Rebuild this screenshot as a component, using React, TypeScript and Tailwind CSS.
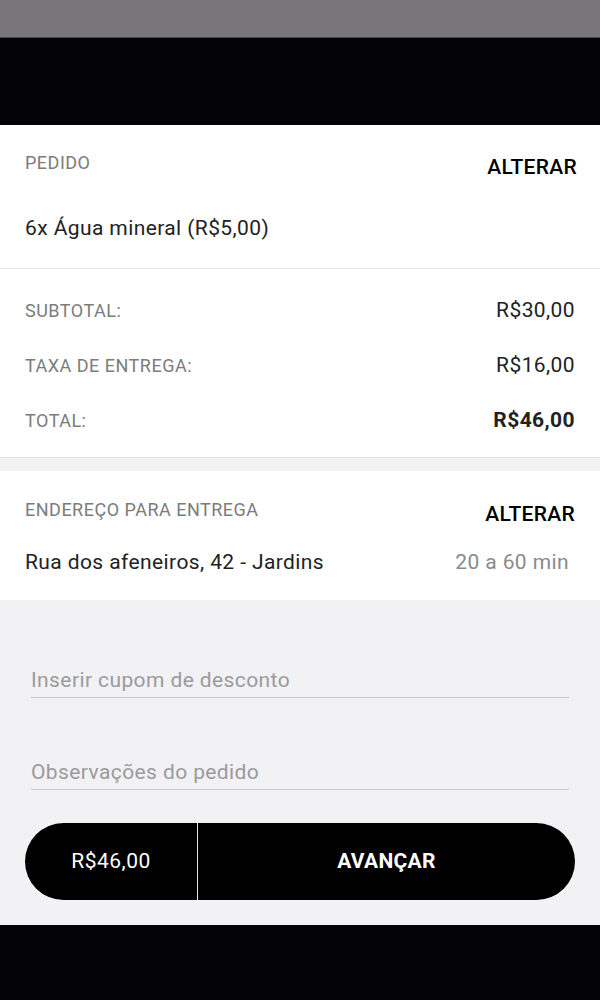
const font = { fontFamily: "Roboto, 'Noto Sans', sans-serif" };

function SummaryRow({ label, value, bold }: { label: string; value: string; bold?: boolean }) {
  return (
    <div className="flex h-[55px] items-center justify-between">
      <span className="text-[18px] uppercase tracking-[0.5px] text-[#7c7c7c]">{label}</span>
      <span className={`text-[21px] tracking-[0.4px] text-[#222] ${bold ? "font-bold" : ""}`}>{value}</span>
    </div>
  );
}

export default function App() {
  return (
    <div className="flex min-h-[1000px] w-[600px] flex-col bg-[#f2f1f4]" style={font}>
      {/* status bar + header */}
      <div className="h-[37px] bg-[#787679]" />
      <div className="h-px bg-[#4a494c]" />
      <div className="h-[87px] bg-[#030205]" />

      {/* pedido */}
      <section className="border-b border-[#e8e8ea] bg-white px-[25px] pb-[26px] pt-[26px]">
        <div className="flex justify-between">
          <span className="text-[18px] leading-[24px] tracking-[0.5px] text-[#7c7c7c]">PEDIDO</span>
          <button className="mr-[-2px] mt-[2px] text-[21px] font-medium leading-[28px] tracking-[0.3px] text-black">
            ALTERAR
          </button>
        </div>
        <p className="mt-[33px] text-[21px] leading-[28px] tracking-[0.4px] text-[#222]">6x Água mineral (R$5,00)</p>
      </section>

      {/* totals */}
      <section className="border-b border-[#e5e5e7] bg-white px-[25px] pb-[9px] pt-[14px]">
        <SummaryRow label="Subtotal:" value="R$30,00" />
        <SummaryRow label="Taxa de entrega:" value="R$16,00" />
        <SummaryRow label="Total:" value="R$46,00" bold />
      </section>

      {/* endereço */}
      <section className="mt-[13px] bg-white px-[25px] pb-[24px] pt-[27px]">
        <div className="flex justify-between">
          <span className="text-[18px] leading-[24px] tracking-[0.5px] text-[#7c7c7c]">ENDEREÇO PARA ENTREGA</span>
          <button className="mt-[2px] text-[21px] font-medium leading-[28px] tracking-[0.3px] text-black">
            ALTERAR
          </button>
        </div>
        <div className="mt-[20px] flex justify-between">
          <span className="text-[21px] leading-[28px] tracking-[0.4px] text-[#222]">Rua dos afeneiros, 42 - Jardins</span>
          <span className="mr-[6px] text-[21px] leading-[28px] tracking-[0.4px] text-[#8a8a8a]">20 a 60 min</span>
        </div>
      </section>

      {/* campos */}
      <div className="flex flex-col gap-[52px] px-[31px] pt-[58px]">
        <input
          placeholder="Inserir cupom de desconto"
          className="h-[40px] border-b border-[#c9c8cb] bg-transparent pt-[4px] text-[21px] tracking-[0.4px] text-[#222] outline-none placeholder:text-[#9b9a9d]"
          style={font}
        />
        <input
          placeholder="Observações do pedido"
          className="h-[40px] border-b border-[#c9c8cb] bg-transparent pt-[4px] text-[21px] tracking-[0.4px] text-[#222] outline-none placeholder:text-[#9b9a9d]"
          style={font}
        />
      </div>

      {/* botão */}
      <div className="px-[25px] pb-[25px] pt-[33px]">
        <div className="flex h-[77px] overflow-hidden rounded-full bg-black">
          <div className="flex w-[173px] items-center justify-center border-r border-[#e6e6e6] text-[21px] tracking-[0.5px] text-white">
            R$46,00
          </div>
          <button className="flex flex-1 items-center justify-center text-[21px] font-bold tracking-[0.3px] text-white">
            AVANÇAR
          </button>
        </div>
      </div>

      <div className="flex-1 bg-[#030205]" />
    </div>
  );
}
